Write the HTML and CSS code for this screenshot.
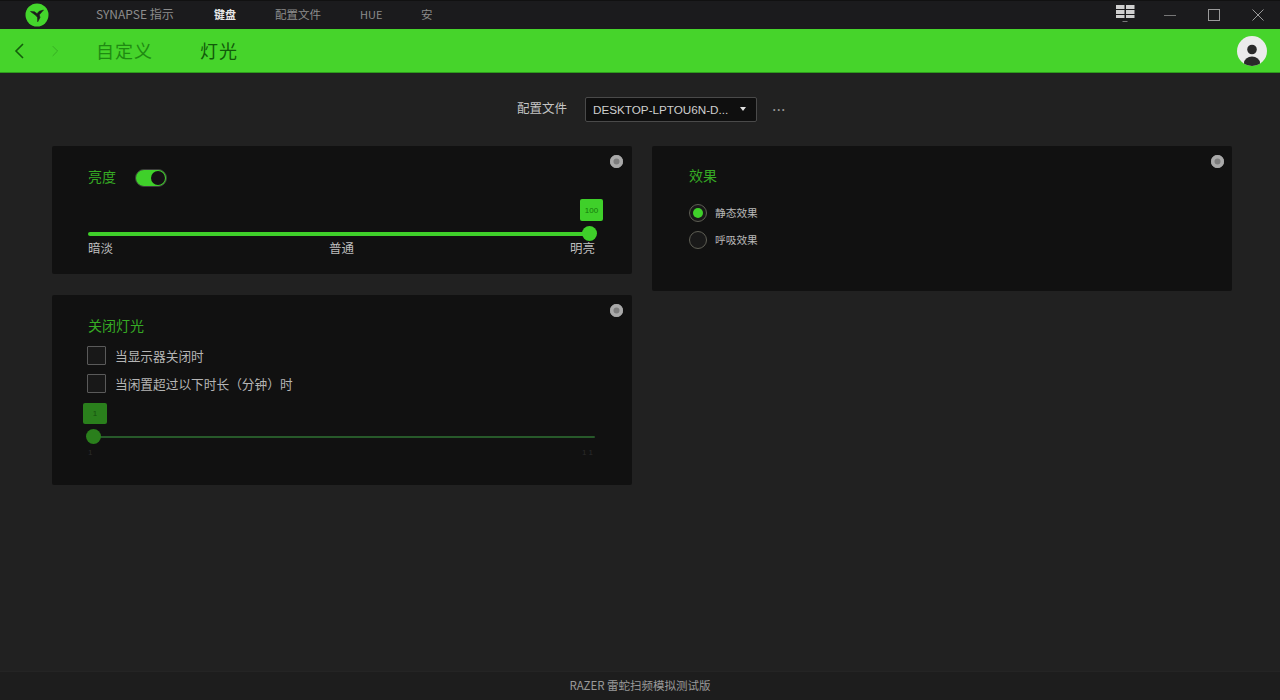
FILE: index.html
```html
<!DOCTYPE html>
<html lang="zh">
<head>
<meta charset="utf-8">
<title>Razer Synapse</title>
<link rel="stylesheet" href="styles.css">
</head>
<body>
<div class="app">
  <header class="titlebar">
    <div class="logo">
      <svg viewBox="0 0 24 24" width="24" height="24"><circle cx="12" cy="12" r="11.500" fill="#44d62c"/><path d="M11 12.500 5.500 8.500 9.500 8.800 12 10.700 14.200 8.300 18.500 7 14.300 11.800 15 14.500 12.700 18.800 12.500 14.500Z" fill="#1c1c1c" stroke="#1c1c1c" stroke-width=".6"/></svg>
    </div>
    <nav class="tabs">
      <span class="tab t-syn">SYNAPSE 指示</span>
      <span class="tab t-key">键盘</span>
      <span class="tab t-pro">配置文件</span>
      <span class="tab t-hue">HUE</span>
      <span class="tab t-an">安</span>
    </nav>
    <div class="winctl">
      <svg class="ic-grid" viewBox="0 0 20 18" width="20" height="18"><g fill="#cfcfcf"><rect x="0" y="0" width="8.500" height="4"/><rect x="10" y="0" width="8.500" height="4"/><rect x="0" y="5" width="8.500" height="4"/><rect x="10" y="5" width="8.500" height="4"/><rect x="0" y="10" width="8.500" height="3"/><rect x="10" y="10" width="8.500" height="3"/></g><rect x="6.500" y="16" width="5" height="1" fill="#777"/></svg>
      <svg class="ic-min" viewBox="0 0 12 12" width="12" height="12"><path d="M0 6.500h12" stroke="#777" stroke-width="1"/></svg>
      <svg class="ic-max" viewBox="0 0 12 12" width="12" height="12"><rect x=".5" y=".5" width="11" height="11" fill="none" stroke="#9a9a9a"/></svg>
      <svg class="ic-close" viewBox="0 0 12 12" width="12" height="12"><path d="M.5.5l11 11M11.500.5l-11 11" stroke="#9a9a9a" fill="none"/></svg>
    </div>
  </header>

  <div class="greenbar">
    <svg class="arrow" viewBox="0 0 10 16" width="10" height="16"><path d="M9 1 2 8l7 7" fill="none" stroke="#145c0c" stroke-width="1.600"/></svg>
    <svg class="arrow arrow-next" viewBox="0 0 10 16" width="7" height="12"><path d="M1 1l7 7-7 7" fill="none" stroke="#36ad23" stroke-width="1.400"/></svg>
    <span class="crumb crumb-dim">自定义</span>
    <span class="crumb crumb-on">灯光</span>
    <svg class="avatar" viewBox="0 0 30 30" width="30" height="30"><defs><clipPath id="av"><circle cx="15" cy="15" r="15"/></clipPath></defs><circle cx="15" cy="15" r="15" fill="#ebebeb"/><g clip-path="url(#av)"><circle cx="15" cy="13.500" r="4.800" fill="#2a2a2a"/><ellipse cx="15" cy="27" rx="8" ry="6.500" fill="#2a2a2a"/></g></svg>
  </div>

  <main class="content">
    <div class="profile">
      <span class="profile-label">配置文件</span>
      <div class="select"><span class="select-text">DESKTOP-LPTOU6N-D...</span><i class="caret"></i></div>
      <span class="dots">•••</span>
    </div>

    <div class="grid">
      <div class="col">
        <section class="card card-bright">
          <i class="info"></i>
          <div class="title-row">
            <h2 class="card-title">亮度</h2>
            <span class="toggle"><i class="knob"></i></span>
          </div>
          <div class="slider">
            <span class="bubble bubble-on">100</span>
            <div class="track"></div>
            <i class="thumb"></i>
          </div>
          <div class="scale"><span>暗淡</span><span>普通</span><span>明亮</span></div>
        </section>

        <section class="card card-off">
          <i class="info"></i>
          <h2 class="card-title">关闭灯光</h2>
          <label class="check first"><i class="box"></i><span>当显示器关闭时</span></label>
          <label class="check"><i class="box"></i><span>当闲置超过以下时长（分钟）时</span></label>
          <div class="slider slider-dim">
            <span class="bubble bubble-dim">1</span>
            <div class="track"></div>
            <i class="thumb"></i>
          </div>
          <div class="ticks"><span>1</span><span>1 1</span></div>
        </section>
      </div>

      <div class="col">
        <section class="card card-effect">
          <i class="info"></i>
          <h2 class="card-title">效果</h2>
          <label class="radio first"><i class="dot on"></i><span>静态效果</span></label>
          <label class="radio"><i class="dot"></i><span>呼吸效果</span></label>
        </section>
      </div>
    </div>
  </main>

  <footer class="footer">RAZER 雷蛇扫频模拟测试版</footer>
</div>
</body>
</html>
```
FILE: styles.css
```css
* { box-sizing: border-box; }
html, body { margin: 0; height: 100%; }
body { background: #212121; color: #ccc; font-family: "Noto Sans CJK SC", "Noto Sans", sans-serif; overflow: hidden; }
.app { width: 1280px; height: 700px; display: flex; flex-direction: column; }

.titlebar { height: 29px; flex: none; background: #1b1b1d; display: flex; align-items: center; border-top: 1px solid #111; }
.logo { width: 24px; height: 24px; margin-left: 25px; display: flex; margin-top: -1px; }
.tabs { display: flex; align-items: center; margin-left: 47px; font-size: 11.500px; color: #8c8c8c; margin-top: -2px; }
.tab { white-space: nowrap; line-height: 14px; }
.t-syn { width: 118px; font-size: 12px; }
.t-key { width: 61px; color: #e6e6e6; font-weight: 700; font-size: 11px; }
.t-pro { width: 85px; }
.t-hue { width: 61px; font-size: 11px; }
.winctl { margin-left: auto; display: flex; align-items: center; }
.ic-grid { margin-right: 28px; margin-top: -2px; }
.ic-min { margin-right: 32px; }
.ic-max { margin-right: 32px; }
.ic-close { margin-right: 16px; }

.greenbar { height: 44px; flex: none; background: #46d42b; display: flex; align-items: center; padding-left: 14px; border-bottom: 1px solid #2f9b1d; }
.arrow { display: block; }
.arrow-next { margin-left: 28px; }
.crumb { font-size: 18px; line-height: 24px; letter-spacing: 1px; margin-top: -1px; }
.crumb-dim { margin-left: 37px; color: #1f8a12; }
.crumb-on { margin-left: 47px; color: #125a0a; }
.avatar { margin-left: auto; margin-right: 13px; }

.content { flex: 1; display: flex; flex-direction: column; padding: 0 48px 0 52px; min-height: 0; }
.profile { display: flex; align-items: center; height: 24px; margin-top: 24px; padding-left: 465px; }
.profile-label { font-size: 12.500px; color: #c4c4c4; width: 68px; margin-top: -3px; }
.select { width: 172px; height: 25px; background: #0f0f0f; border: 1px solid #4a4a4a; border-radius: 2px; display: flex; align-items: center; padding: 0 10px 0 7px; font-family: "Liberation Sans", sans-serif; font-size: 11.700px; color: #cfcfcf; }
.select-text { flex: 1; white-space: nowrap; }
.caret { width: 0; height: 0; border: 3.500px solid transparent; border-top: 4px solid #e0e0e0; border-bottom: 0; }
.dots { margin-left: 16px; font-size: 7px; letter-spacing: 2px; color: #9a9a9a; font-family: "Liberation Sans", sans-serif; }

.grid { display: grid; grid-template-columns: 580px 580px; column-gap: 20px; margin-top: 25px; }
.col { display: flex; flex-direction: column; gap: 21px; }
.card { position: relative; background: #111; border-radius: 2px; padding-left: 36px; padding-right: 37px; }
.card-bright { height: 128px; padding-top: 19px; }
.card-off { height: 190px; padding-top: 20px; }
.card-effect { height: 145px; padding-top: 19px; padding-left: 37px; }
.card-effect .info { right: 8px; }
.card-title { margin: 0; font-size: 14px; line-height: 20px; font-weight: 400; color: #36ab24; }
.info { position: absolute; top: 9px; right: 9px; width: 13px; height: 13px; border-radius: 50%; background: #a9a9a9; box-shadow: inset 0 0 0 3.500px #a9a9a9, inset 0 0 0 13px #7d7d7d; }

.title-row { display: flex; align-items: center; }
.toggle { position: relative; margin-left: 19px; margin-top: 4px; width: 32px; height: 18px; border-radius: 9px; background: #3fd02a; border: 1px solid #3c3c3c; }
.knob { position: absolute; top: 1px; right: 1px; width: 14px; height: 14px; border-radius: 50%; background: #141014; }

.slider { position: relative; height: 6px; }
.card-bright .slider { margin-top: 44px; }
.track { height: 4px; margin-top: 1px; background: #3fd02a; border-radius: 2px; position: absolute; left: 0; right: 5px; }
.thumb { position: absolute; right: -2px; top: -5px; width: 15px; height: 15px; border-radius: 50%; background: #3fd02a; }
.bubble { position: absolute; width: 23px; height: 22px; border-radius: 2px; display: flex; align-items: center; justify-content: center; font-family: "Liberation Sans", sans-serif; font-size: 8px; }
.bubble-on { right: -8px; top: -32px; background: #3fd02a; color: #157a0a; }

.scale { display: flex; justify-content: space-between; margin-top: 2px; font-size: 12.500px; line-height: 18px; color: #bdbdbd; }

.check { display: flex; align-items: center; height: 28px; font-size: 12.700px; color: #b5b5b5; }
.check.first { margin-top: 6px; }
.box { width: 19px; height: 19px; margin-left: -1px; margin-right: 9px; border: 1px solid #5a5a5a; background: #181818; border-radius: 1px; flex: none; }

.slider-dim { margin-top: 37px; }
.slider-dim .track { height: 2px; margin-top: 2px; right: 0; background: #27592a; }
.slider-dim .thumb { right: auto; left: -2px; top: -5px; background: #2a7f1c; }
.bubble-dim { left: -5px; top: -31px; width: 24px; height: 21px; background: #2a7f1c; color: #175010; }
.ticks { display: flex; justify-content: space-between; margin-top: 8px; font-family: "Liberation Sans", sans-serif; font-size: 8px; line-height: 10px; color: #2b2b2b; padding-right: 2px; }

.radio { display: flex; align-items: center; height: 27px; font-size: 10.700px; color: #b9b9b9; }
.radio.first { margin-top: 14px; }
.dot { position: relative; width: 18px; height: 18px; margin-right: 8px; border: 1px solid #5e5e54; border-radius: 50%; background: #191919; flex: none; }
.dot.on::after { content: ""; position: absolute; left: 3px; top: 3px; width: 10px; height: 10px; border-radius: 50%; background: #3fd02a; }

.footer { height: 29px; flex: none; background: #1d1d1d; text-align: center; font-size: 11.500px; line-height: 27px; color: #999; border-top: 1px solid #242424; }
```
